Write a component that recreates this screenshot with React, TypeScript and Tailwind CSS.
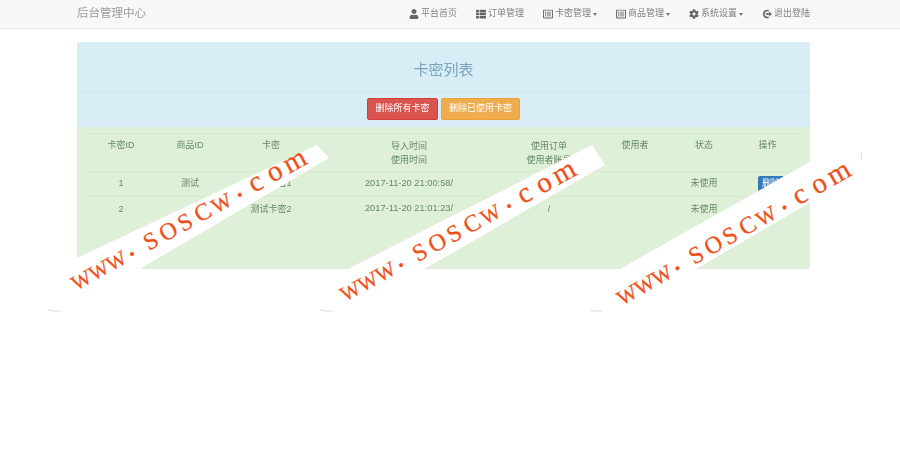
import { FaUser, FaCog, FaRegListAlt, FaThList } from 'react-icons/fa';

const cjk = "font-['Liberation_Sans','Noto_Sans_CJK_SC',sans-serif]";

function LogOutIcon() {
  return (
    <svg viewBox="0 0 12 12" className="w-[10px] h-[10px]" fill="none" stroke="currentColor">
      <path d="M8 2.2A4.2 4.2 0 1 0 8 9.8" strokeWidth="2" />
      <path d="M4.5 6H9" strokeWidth="2" />
      <path d="M8.5 3L12 6l-3.5 3z" fill="currentColor" stroke="none" />
    </svg>
  );
}

const navItems = [
  { label: '平台首页', icon: <FaUser className="w-[10px] h-[10px]" /> },
  { label: '订单管理', icon: <FaThList className="w-[10px] h-[10px]" /> },
  { label: '卡密管理', icon: <FaRegListAlt className="w-[10px] h-[10px]" />, caret: true },
  { label: '商品管理', icon: <FaRegListAlt className="w-[10px] h-[10px]" />, caret: true },
  { label: '系统设置', icon: <FaCog className="w-[10px] h-[10px]" />, caret: true },
  { label: '退出登陆', icon: <LogOutIcon /> },
];

const rows = [
  { id: '1', goods: '测试', card: '测试卡密1', time: '2017-11-20 21:00:58/', order: '/' },
  { id: '2', goods: '', card: '测试卡密2', time: '2017-11-20 21:01:23/', order: '/' },
];

const bands = [
  { points: '317,145 329,158 63,314 50,311 42,297 77,258', x: 76, y: 291, angle: -28.8, corner: 'M48 310Q52 311.5 60 311' },
  { points: '592,145 605,165 334,321 323,311 314,296 348,269', x: 345, y: 302, angle: -28.7, corner: 'M320 310Q324 311.5 332 311' },
  { points: '852,138 862,172 604,323 593,311 584,296 620,269', x: 622, y: 306, angle: -29.6, corner: 'M590 310Q594 311.5 602 311' },
];

function Watermark() {
  return (
    <svg className="absolute inset-0 w-[900px] h-[456px] pointer-events-none" viewBox="0 0 900 456">
      {bands.map((b) => (
        <g key={b.x}>
          <polygon points={b.points} fill="#ffffff" />
          <path d={b.corner} fill="none" stroke="#dcdcdc" strokeWidth="1" />
          <text
            transform={`translate(${b.x} ${b.y}) rotate(${b.angle})`}
            fontFamily="'Liberation Serif', serif"
            fill="#ee5019"
            stroke="#ee5019"
            strokeWidth="0.25"
          >
            <tspan x="0 20 40" y="0" fontSize="21">WWW</tspan>
            <tspan x="63" y="-4" fontSize="32">.</tspan>
            <tspan x="83 101 122 141" y="0" fontSize="24">SOSC</tspan>
            <tspan x="160" y="0" fontSize="21">W</tspan>
            <tspan x="186" y="-4" fontSize="32">.</tspan>
            <tspan x="203 224 243" y="0" fontSize="29">com</tspan>
          </text>
        </g>
      ))}
      <path d="M861 152Q862.5 155 861 159" fill="none" stroke="#d8d8d8" strokeWidth="1" />
    </svg>
  );
}

export default function App() {
  return (
    <div className={`relative w-[900px] h-[456px] overflow-hidden bg-white ${cjk}`}>
      <div className="blur-[0.6px]">
        {/* Top Bar */}
        <div className="h-[29px] bg-[#f8f8f8] border-b border-[#e9e9e9] pl-[77px] pr-[90px] flex items-center justify-between text-[#808080]">
          <span className="text-[11.5px] text-[#9a9a9a]">后台管理中心</span>
          <div className="flex items-center gap-[19px] text-[9px]">
            {navItems.map((item) => (
              <div key={item.label} className="flex items-center gap-[2px]">
                <span className="text-[#666666]">{item.icon}</span>
                <span>{item.label}</span>
                {item.caret && (
                  <span className="w-0 h-0 border-x-[2.5px] border-x-transparent border-t-[3px] border-t-[#777777]" />
                )}
              </div>
            ))}
          </div>
        </div>

        {/* Panel */}
        <div className="ml-[77px] mr-[90px] mt-[13px] h-[227px] rounded-[2px] overflow-hidden flex flex-col border-b border-[#e3ebdf]">
          <div className="h-[50px] pt-[7px] bg-[#d9edf7] border-b border-[#d0e6f0] flex items-center justify-center text-[15px] text-[#7aa5bf]">
            卡密列表
          </div>
          <div className="h-[35px] pb-[2px] bg-[#d9edf7] flex items-center justify-center gap-[3px] text-[9px] text-white">
            <div className="w-[71px] h-[22px] rounded-[2px] bg-[#d9534f] border border-[#d43f3a] flex items-center justify-center">
              删除所有卡密
            </div>
            <div className="w-[79px] h-[22px] rounded-[2px] bg-[#f0ad4e] border border-[#eea236] flex items-center justify-center">
              删除已使用卡密
            </div>
          </div>
          <div className="flex-1 bg-[#dff0d8] px-[10px] pt-[6px] text-[9px] text-[#648a62]">
            <table className="w-[713px] table-fixed border-collapse text-center">
              <colgroup>
                <col className="w-[68px]" />
                <col className="w-[70px]" />
                <col className="w-[92px]" />
                <col className="w-[184px]" />
                <col className="w-[96px]" />
                <col className="w-[76px]" />
                <col className="w-[62px]" />
                <col className="w-[65px]" />
              </colgroup>
              <thead>
                <tr className="h-[38px] border-y border-[#d6e9c6] align-top">
                  <th className="font-normal pt-[5px]">卡密ID</th>
                  <th className="font-normal pt-[5px]">商品ID</th>
                  <th className="font-normal pt-[5px]">卡密</th>
                  <th className="font-normal pt-[5px] leading-[14px]">导入时间<br />使用时间</th>
                  <th className="font-normal pt-[5px] leading-[14px]">使用订单<br />使用者账号</th>
                  <th className="font-normal pt-[5px]">使用者</th>
                  <th className="font-normal pt-[5px]">状态</th>
                  <th className="font-normal pt-[5px]">操作</th>
                </tr>
              </thead>
              <tbody>
                {rows.map((r) => (
                  <tr key={r.id} className="h-[25px] border-b border-[#d6e9c6] last:border-b-0">
                    <td>{r.id}</td>
                    <td>{r.goods}</td>
                    <td>{r.card}</td>
                    <td className="text-[9.3px]">{r.time}</td>
                    <td>{r.order}</td>
                    <td></td>
                    <td>未使用</td>
                    <td className="text-left pl-[23px]">
                      <span className="block w-[26px] h-[16px] leading-[15px] text-center rounded-[2px] bg-[#337ab7] text-white">删除</span>
                    </td>
                  </tr>
                ))}
              </tbody>
            </table>
          </div>
        </div>
      </div>

      <Watermark />
    </div>
  );
}
